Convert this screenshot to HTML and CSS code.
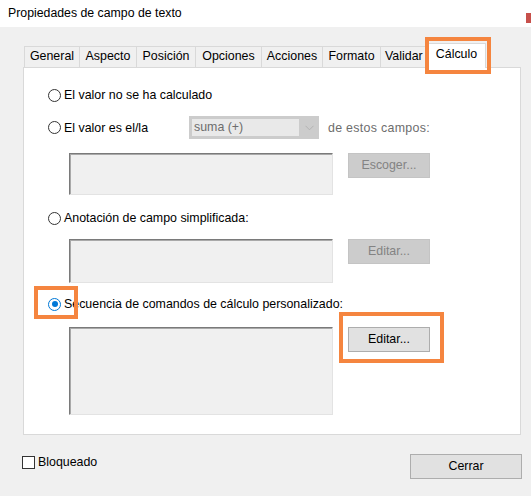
FILE: index.html
```html
<!DOCTYPE html>
<html lang="es">
<head>
<meta charset="utf-8">
<title>Propiedades de campo de texto</title>
<link rel="stylesheet" href="styles.css">
</head>
<body>
<div class="dialog">
  <div class="titlebar">
    <span class="title">Propiedades de campo de texto</span>
    <span class="close-edge"></span>
  </div>

  <div class="tabs">
    <div class="tab tab-general">General</div>
    <div class="tab tab-aspecto">Aspecto</div>
    <div class="tab tab-posicion">Posición</div>
    <div class="tab tab-opciones">Opciones</div>
    <div class="tab tab-acciones">Acciones</div>
    <div class="tab tab-formato">Formato</div>
    <div class="tab tab-validar">Validar</div>
    <div class="tab tab-active">Cálculo<span class="mark mark-tab"></span></div>
  </div>

  <div class="panel">
    <div class="option option-1">
      <span class="radio"></span>
      <span class="label">El valor no se ha calculado</span>
    </div>

    <div class="option option-2">
      <span class="radio"></span>
      <span class="label label-fixed">El valor es el/la</span>
      <div class="select">
        <span class="select-value">suma (+)</span>
        <span class="select-arrow">
          <svg width="9" height="6" viewBox="0 0 9 6"><path d="M0.5 0.8 L4.5 4.8 L8.5 0.8" fill="none" stroke="#b3b3b3" stroke-width="1"/></svg>
        </span>
      </div>
      <span class="hint">de estos campos:</span>
    </div>

    <div class="field-row field-row-1">
      <div class="field field-short"></div>
      <div class="btn btn-disabled">Escoger...</div>
    </div>

    <div class="option option-3">
      <span class="radio"></span>
      <span class="label">Anotación de campo simplificada:</span>
    </div>

    <div class="field-row field-row-2">
      <div class="field field-mid"></div>
      <div class="btn btn-disabled">Editar...</div>
    </div>

    <div class="option option-4">
      <span class="radio radio-checked"><span class="mark mark-radio"></span></span>
      <span class="label">Secuencia de comandos de cálculo personalizado:</span>
    </div>

    <div class="field-row field-row-3">
      <div class="field field-tall"></div>
      <div class="btn btn-enabled">Editar...<span class="mark mark-btn"></span></div>
    </div>
  </div>

  <div class="footer">
    <label class="check">
      <span class="checkbox"></span>
      <span class="label">Bloqueado</span>
    </label>
    <div class="btn btn-enabled btn-close">Cerrar</div>
  </div>
</div>
</body>
</html>
```

FILE: styles.css
```css
* { box-sizing: border-box; }

html, body {
  margin: 0;
  padding: 0;
  background: #f0f0f0;
}

body {
  font-family: "Liberation Sans", Arial, sans-serif;
  font-size: 12.4px;
  color: #000;
  width: 531px;
  height: 496px;
  overflow: hidden;
}

.dialog {
  width: 531px;
  height: 496px;
}

.titlebar {
  height: 27px;
  background: #fff;
  display: flex;
  justify-content: space-between;
  align-items: flex-start;
  padding-left: 8px;
}

.title {
  line-height: 26px;
  font-size: 12.3px;
}

.close-edge {
  width: 5px;
  height: 10px;
  margin-top: 13px;
  background: #c7504b;
}

/* Tabs */
.tabs {
  display: flex;
  align-items: flex-end;
  margin-top: 15px;
  padding-left: 24px;
  height: 25px;
  position: relative;
  z-index: 2;
}

.tab {
  height: 21px;
  border: 1px solid #d9d9d9;
  border-bottom: none;
  margin-right: -1px;
  background: #f0f0f0;
  text-align: center;
  line-height: 19px;
  white-space: nowrap;
}

.tab-general { width: 56px; }
.tab-aspecto { width: 58px; }
.tab-posicion { width: 60px; }
.tab-opciones { width: 67px; }
.tab-acciones { width: 62px; }
.tab-formato { width: 59px; }
.tab-validar { width: 50px; text-align: left; padding-left: 4px; overflow: hidden; }

.tab-active {
  position: relative;
  width: 59px;
  height: 25px;
  margin-left: -2px;
  margin-bottom: -1px;
  background: #fff;
  line-height: 20px;
  padding-bottom: 4px;
}

/* Orange annotation marks */
.mark {
  position: absolute;
  border: 4px solid #f5853f;
  pointer-events: none;
}

.mark-tab {
  left: -3px;
  top: -7px;
  width: 66px;
  height: 37px;
}

.mark-radio {
  left: -15px;
  top: -13px;
  width: 44px;
  height: 33px;
}

.mark-btn {
  left: -10px;
  top: -16px;
  width: 105px;
  height: 51px;
}

/* Panel */
.panel {
  margin-left: 23px;
  width: 498px;
  background: #fff;
  border: 1px solid #d9d9d9;
  padding: 0 0 19px 24px;
  position: relative;
  z-index: 1;
}

.option {
  display: flex;
  align-items: center;
  height: 20px;
}

.option-1 { margin-top: 17px; }
.option-2 { margin-top: 11px; height: 23px; }
.option-3 { margin-top: 13px; }
.option-4 { margin-top: 11px; }

.radio {
  position: relative;
  width: 13px;
  height: 13px;
  border: 1px solid #333;
  border-radius: 50%;
  background: #fff;
  flex: none;
  margin-right: 3px;
}

.radio-checked {
  border-color: #0078d7;
}

.radio-checked::after {
  content: "";
  position: absolute;
  left: 2.5px;
  top: 2.5px;
  width: 6px;
  height: 6px;
  border-radius: 50%;
  background: #0078d7;
}

.label {
  white-space: nowrap;
}

.label-fixed {
  width: 125px;
}

.select {
  display: flex;
  width: 130px;
  height: 23px;
  background: #cccccc;
  padding: 3px 0 3px 3px;
}

.select-value {
  flex: 1;
  background: #e9e9e9;
  color: #6d6d6d;
  line-height: 17px;
  padding-left: 2px;
}

.select-arrow {
  width: 20px;
  display: flex;
  align-items: center;
  justify-content: center;
}

.hint {
  margin-left: 9px;
  color: #6d6d6d;
  letter-spacing: 0.3px;
}

.field-row {
  display: flex;
  align-items: flex-start;
  gap: 15px;
  padding-left: 21px;
}

.field-row-1 { margin-top: 14px; }
.field-row-2 { margin-top: 11px; }
.field-row-3 { margin-top: 13px; }

.field {
  width: 264px;
  background: #f0f0f0;
  border: 1px solid;
  border-color: #7a7a7a #e3e3e3 #e3e3e3 #7a7a7a;
  box-shadow: inset 1px 1px 0 #a9a9a9;
}

.field-short { height: 42px; }
.field-mid { height: 44px; }
.field-tall { height: 88px; }

.btn {
  position: relative;
  width: 82px;
  height: 25px;
  border: 1px solid;
  text-align: center;
  line-height: 23px;
  white-space: nowrap;
}

.btn-disabled {
  background: #cccccc;
  border-color: #c4c4c4;
  color: #838383;
}

.btn-enabled {
  background: #e1e1e1;
  border-color: #adadad;
  color: #000;
}

/* Footer */
.footer {
  display: flex;
  justify-content: space-between;
  align-items: flex-start;
  margin-top: 19px;
  padding: 0 9px 0 22px;
}

.check {
  display: flex;
  align-items: center;
  margin-top: 1px;
}

.checkbox {
  width: 13px;
  height: 13px;
  border: 1px solid #333;
  background: #fff;
  margin-right: 3px;
}

.btn-close {
  width: 112px;
}
```
